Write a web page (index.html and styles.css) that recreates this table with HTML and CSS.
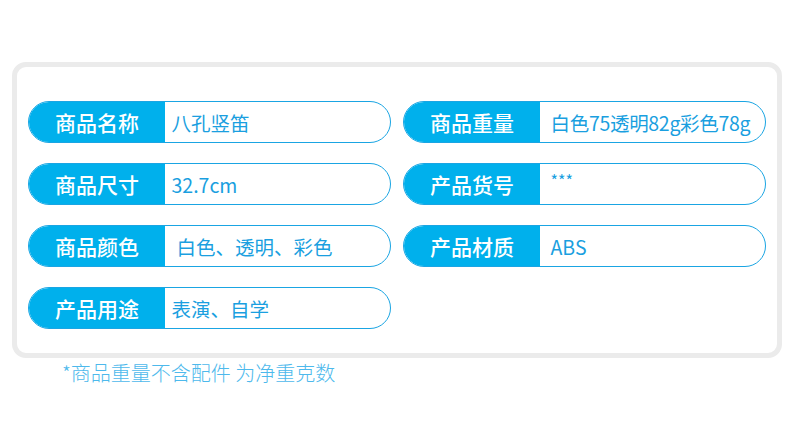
FILE: index.html
```html
<!DOCTYPE html>
<html lang="zh-CN">
<head>
<meta charset="utf-8">
<title>商品参数</title>
<link rel="stylesheet" href="styles.css">
</head>
<body>
<div class="card">
  <div class="grid">
    <div class="pill"><div class="label">商品名称</div><div class="value">八孔竖笛</div></div>
    <div class="pill"><div class="label">商品重量</div><div class="value right tight">白色75透明82g彩色78g</div></div>
    <div class="pill"><div class="label">商品尺寸</div><div class="value">32.7cm</div></div>
    <div class="pill"><div class="label">产品货号</div><div class="value right stars">***</div></div>
    <div class="pill"><div class="label">商品颜色</div><div class="value wide">白色、透明、彩色</div></div>
    <div class="pill"><div class="label">产品材质</div><div class="value right">ABS</div></div>
    <div class="pill"><div class="label">产品用途</div><div class="value">表演、自学</div></div>
  </div>
</div>
<p class="note">*商品重量不含配件 为净重克数</p>
</body>
</html>
```

FILE: styles.css
```css
html, body {
  margin: 0;
  padding: 0;
  background: #ffffff;
}
body {
  font-family: "Noto Sans CJK SC", "Noto Sans", sans-serif;
  width: 790px;
  height: 446px;
  overflow: hidden;
}
.card {
  margin: 62px 0 0 12px;
  width: 770px;
  height: 296px;
  box-sizing: border-box;
  border: 5px solid #ebebeb;
  border-radius: 14px;
  padding: 34px 11px 0 11px;
}
.grid {
  display: grid;
  grid-template-columns: 363px 363px;
  column-gap: 12px;
  row-gap: 20px;
}
.pill {
  display: flex;
  height: 42px;
  box-sizing: border-box;
  border: 1.5px solid #1aa5e3;
  border-radius: 21px;
  overflow: hidden;
}
.label {
  flex: 0 0 135px;
  background: #00b0ec;
  color: #ffffff;
  font-size: 21px;
  font-weight: 500;
  display: flex;
  align-items: center;
  justify-content: center;
  margin: -1.5px 0 -1.5px -1.5px;
  padding-left: 2px;
}
.value {
  flex: 1;
  display: flex;
  align-items: center;
  padding-left: 7px;
  color: #1a9fe0;
  font-size: 19.5px;
  white-space: nowrap;
}
.value.wide {
  padding-left: 12px;
}
.value.right {
  padding-left: 11px;
}
.value.tight {
  letter-spacing: -0.3px;
}
.value.stars {
  align-items: flex-start;
  padding-top: 4px;
  font-size: 16px;
}
.note {
  margin: 2px 0 0 62px;
  font-size: 20px;
  font-weight: 300;
  color: #4db9ec;
  line-height: 26px;
}
```
